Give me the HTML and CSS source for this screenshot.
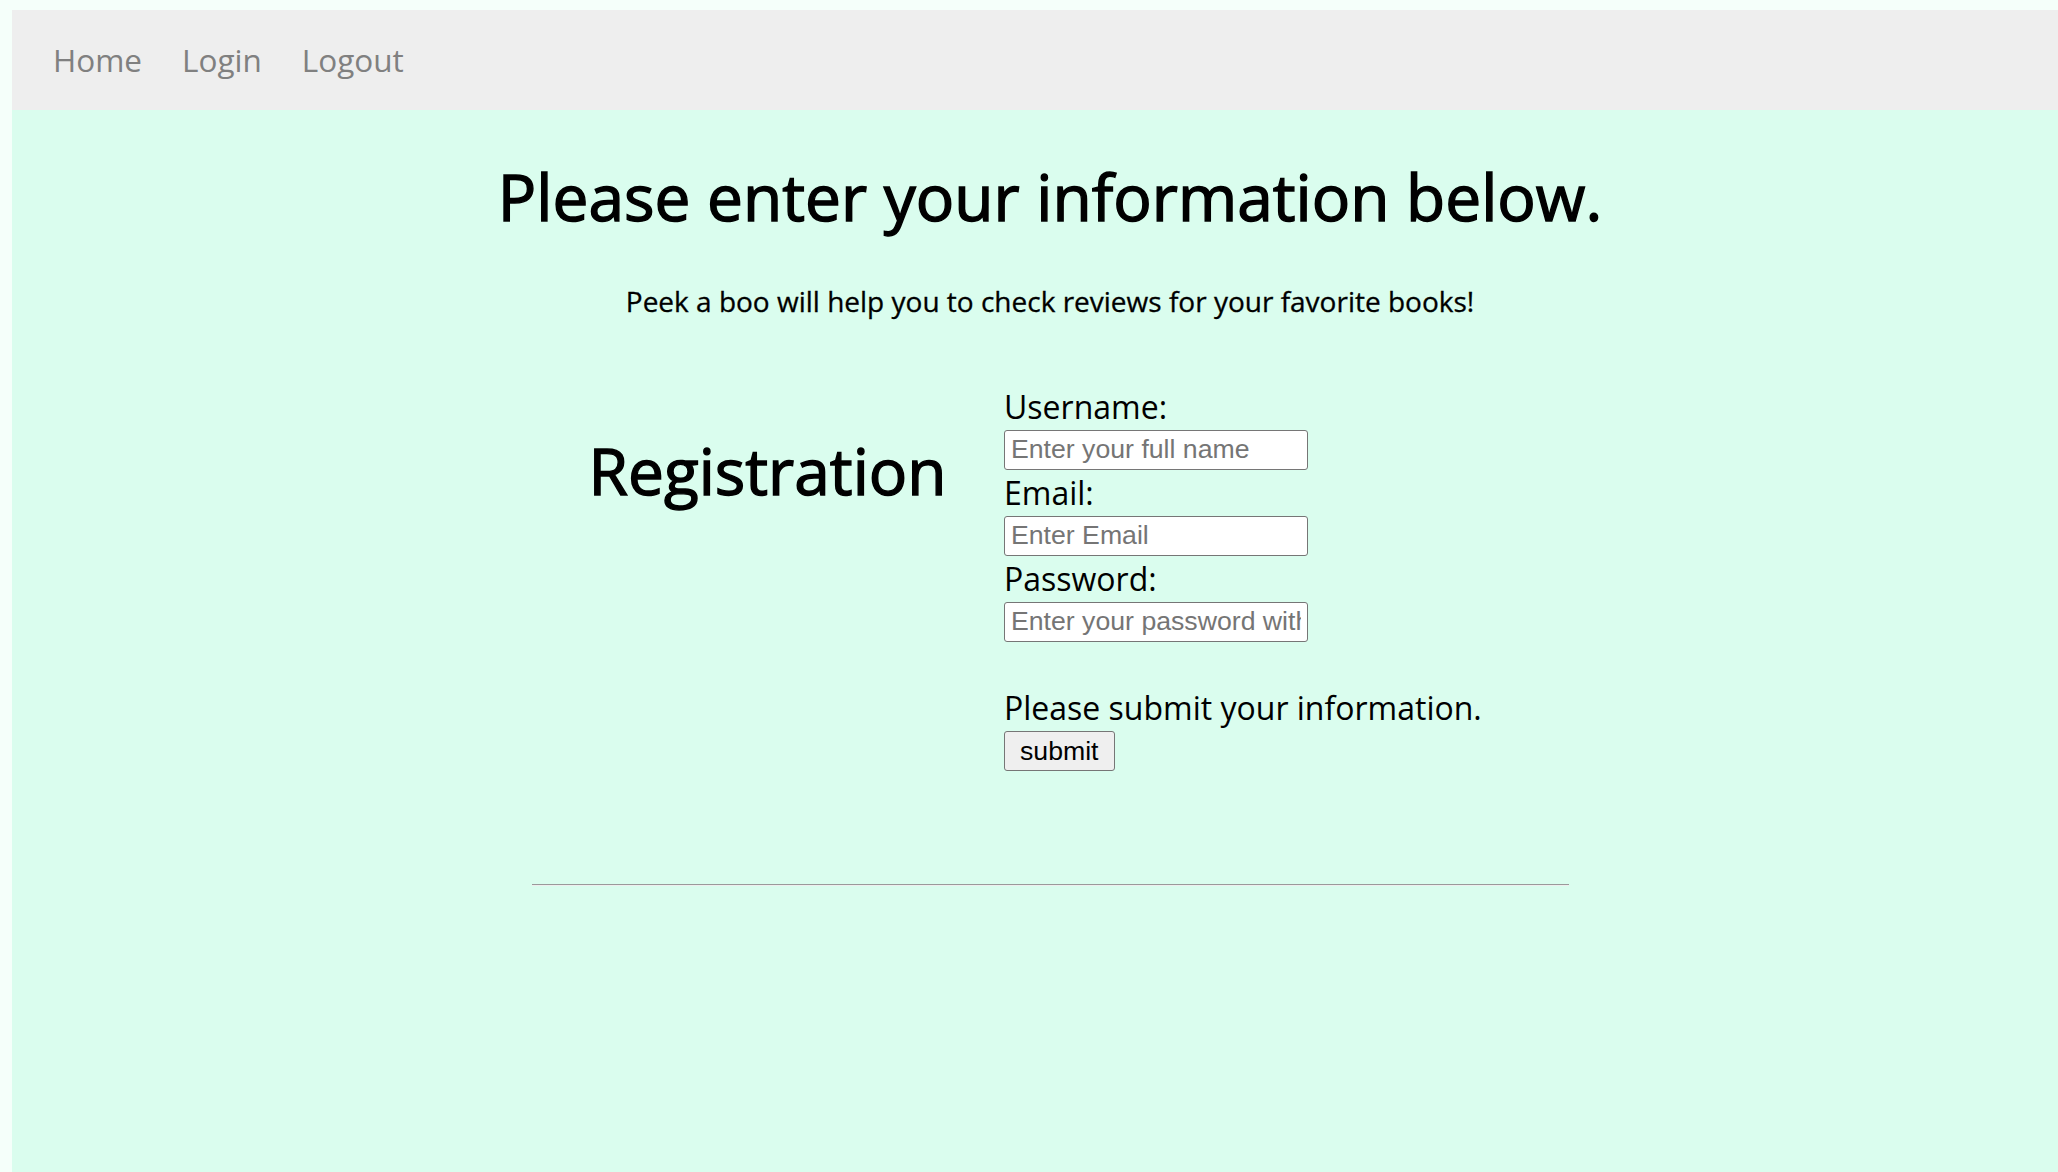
FILE: index.html
```html
<!DOCTYPE html>
<html lang="en">
<head>
<meta charset="utf-8">
<title>Peek a boo - Registration</title>
<link rel="stylesheet" href="styles.css">
</head>
<body>
<div class="page">
  <nav class="topnav">
    <a class="topnav-link" href="#">Home</a>
    <a class="topnav-link" href="#">Login</a>
    <a class="topnav-link" href="#">Logout</a>
  </nav>
  <main class="main">
    <h1 class="title">Please enter your information below.</h1>
    <p class="lead">Peek a boo will help you to check reviews for your favorite books!</p>
    <section class="reg">
      <h2 class="reg-title">Registration</h2>
      <form class="reg-form">
        <label class="field-label" for="username">Username:</label>
        <input class="field-input" id="username" type="text" placeholder="Enter your full name">
        <label class="field-label" for="email">Email:</label>
        <input class="field-input" id="email" type="email" placeholder="Enter Email">
        <label class="field-label" for="password">Password:</label>
        <input class="field-input" id="password" type="password" placeholder="Enter your password with at least 8 characters">
        <p class="submit-note">Please submit your information.</p>
        <button class="submit-btn" type="submit">submit</button>
      </form>
    </section>
    <hr class="divider">
  </main>
</div>
</body>
</html>
```
FILE: styles.css
```css
html, body {
  background: #f5fffa;
  overflow: hidden;
}
body {
  margin: 10px 0 0 12px;
  font-family: "Open Sans", "Noto Sans", sans-serif;
  color: #000;
}
.page {
  width: 2076px;
  min-height: calc(100vh - 10px);
  background: #dafdee;
}
.topnav {
  height: 100px;
  background: #eeeeee;
  display: flex;
  align-items: center;
  padding-left: 41px;
  gap: 40px;
}
.topnav-link {
  font-size: 31.5px;
  line-height: 43px;
  margin-top: -2px;
  color: #808080;
  text-decoration: none;
}
.main {
  display: flex;
  flex-direction: column;
}
.title {
  margin: 42.5px 0 0;
  font-size: 64px;
  font-weight: 400;
  -webkit-text-stroke: 1.4px #000;
  text-align: center;
}
.lead {
  margin: 42px 0 0;
  font-size: 28px;
  -webkit-text-stroke: 0.3px #000;
  text-align: center;
}
.reg {
  display: flex;
  align-items: flex-start;
  margin-top: 64.3px;
  padding-left: 574px;
}
.reg-title {
  width: 363px;
  margin: 43px 55px 0 0;
  font-size: 64px;
  font-weight: 400;
  -webkit-text-stroke: 1.4px #000;
  text-align: center;
}
.reg-form {
  display: flex;
  flex-direction: column;
  align-items: flex-start;
  width: 509px;
}
.field-label {
  display: block;
  font-size: 32px;
  line-height: 46px;
}
.field-input {
  display: block;
  box-sizing: border-box;
  width: 304px;
  height: 40px;
  margin: 0;
  padding: 0 6px;
  border: 1px solid #767676;
  border-radius: 3px;
  background: #fff;
  font-family: "Liberation Sans", Arial, sans-serif;
  font-size: 26.67px;
  color: #000;
}
.field-input::placeholder {
  color: #757575;
}
.submit-note {
  margin: 43.6px 0 0;
  font-size: 32px;
  line-height: 46px;
}
.submit-btn {
  box-sizing: border-box;
  height: 40px;
  margin: 0;
  padding: 0 15px;
  border: 1px solid #767676;
  border-radius: 3px;
  background: #efefef;
  font-family: "Liberation Sans", Arial, sans-serif;
  font-size: 26.67px;
  color: #000;
}
.divider {
  width: 1037px;
  height: 0;
  margin: 113px auto 0;
  border: none;
  border-top: 1px solid #9a9a9a;
  border-bottom: 1px solid #eeeeee;
}
```
